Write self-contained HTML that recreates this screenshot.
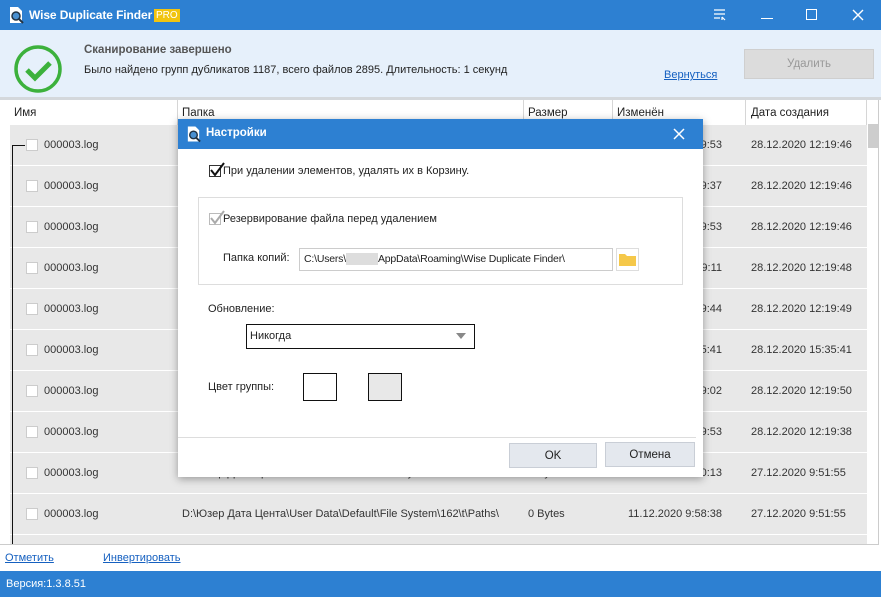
<!DOCTYPE html>
<html><head><meta charset="utf-8">
<style>
*{margin:0;padding:0;box-sizing:border-box}
body{width:881px;height:597px;overflow:hidden;background:#fff;font-family:"Liberation Sans","DejaVu Sans",sans-serif;font-size:11px;color:#222;position:relative}
.abs{position:absolute}
.title{left:0;top:0;width:881px;height:30px;background:#2d80d2;color:#fff}
.hdr{left:0;top:30px;width:881px;height:68px;background:#e6f0fb}
.grayline{left:0;top:97px;width:881px;height:3px;background:#d4d8dc}
.th{top:100px;height:25px;line-height:26px;font-size:11.5px;color:#222}
.sep{top:100px;width:1px;height:25px;background:#d6d6d6}
.row{left:10px;width:857px;height:40px;background:#e8e8e8}
.cell{line-height:40px;font-size:11px;color:#333;white-space:nowrap}
.cb{width:12px;height:12px;background:#fff;border:1px solid #ccc}
a{color:#1560c0;text-decoration:underline}
.dlg{left:178px;top:119px;width:525px;height:358px;background:#fff;box-shadow:0 2px 8px rgba(0,0,0,.35)}
.btn{background:#e4e8ee;border:1px solid #c9ced6;text-align:center;line-height:24px;font-size:11.5px;color:#222}
</style></head><body>
<div class="abs title">
 <svg class="abs" style="left:7px;top:6px" width="18" height="18" viewBox="0 0 18 18"><path d="M3 1h8l4 4v12H3z" fill="#fff"/><circle cx="9" cy="10" r="4" fill="#4a90d0" stroke="#234" stroke-width="1.5"/><path d="M12 13l4 4" stroke="#234" stroke-width="2"/></svg>
 <div class="abs" style="left:29px;top:8px;font-weight:bold;font-size:12px;letter-spacing:-0.1px">Wise Duplicate Finder</div>
 <div class="abs" style="left:154px;top:9px;background:#f1c40f;color:#fff;font-size:10px;padding:0 2px;line-height:13px">PRO</div>
 <svg class="abs" style="left:713px;top:9px" width="14" height="12"><path d="M1 1h11M1 5h11M1 9h6M9 8l3 3M9 8v3" stroke="#fff" stroke-width="1.2" fill="none"/></svg>
 <div class="abs" style="left:761px;top:18px;width:12px;height:1px;background:#fff"></div>
 <div class="abs" style="left:806px;top:9px;width:11px;height:11px;border:1px solid #fff"></div>
 <svg class="abs" style="left:852px;top:9px" width="12" height="12"><path d="M1 1l10 10M11 1L1 11" stroke="#fff" stroke-width="1.4"/></svg>
</div>
<div class="abs hdr">
 <svg class="abs" style="left:13px;top:14px" width="50" height="50"><circle cx="25" cy="25" r="22" fill="none" stroke="#3cb13c" stroke-width="3.5"/><path d="M14 26l8 8 15-15" fill="none" stroke="#3cb13c" stroke-width="5"/></svg>
 <div class="abs" style="left:84px;top:14px;font-weight:bold;color:#555;font-size:11.5px">Сканирование завершено</div>
 <div class="abs" style="left:84px;top:34px;font-size:11px;color:#222">Было найдено групп дубликатов 1187, всего файлов 2895. Длительность: 1 секунд</div>
 <a class="abs" style="left:664px;top:39px;font-size:11px">Вернуться</a>
 <div class="abs" style="left:744px;top:19px;width:130px;height:30px;background:#dcdcdc;border:1px solid #cfcfcf;color:#999;text-align:center;line-height:28px;font-size:11.5px">Удалить</div>
</div>
<div class="abs grayline"></div>
<div class="abs th" style="left:14px">Имя</div>
<div class="abs th" style="left:182px">Папка</div>
<div class="abs th" style="left:528px">Размер</div>
<div class="abs th" style="left:617px">Изменён</div>
<div class="abs th" style="left:751px">Дата создания</div>
<div class="abs sep" style="left:177px"></div><div class="abs sep" style="left:523px"></div><div class="abs sep" style="left:612px"></div><div class="abs sep" style="left:745px"></div><div class="abs sep" style="left:866px"></div>
<div class="abs" style="left:878px;top:100px;width:1px;height:445px;background:#ccc"></div>
<div class="abs" style="left:0;top:544px;width:879px;height:1px;background:#ccc"></div>
<div class="abs" style="left:868px;top:124px;width:10px;height:24px;background:#cdcdcd"></div>

<div class="abs row" style="top:125px"></div>
<div class="abs row" style="top:166px"></div>
<div class="abs row" style="top:207px"></div>
<div class="abs row" style="top:248px"></div>
<div class="abs row" style="top:289px"></div>
<div class="abs row" style="top:330px"></div>
<div class="abs row" style="top:371px"></div>
<div class="abs row" style="top:412px"></div>
<div class="abs row" style="top:453px"></div>
<div class="abs row" style="top:494px"></div>
<div class="abs row" style="top:535px;height:9px"></div>

<div class="abs" style="left:12px;top:145px;width:1px;height:399px;background:#111"></div>
<div class="abs" style="left:12px;top:145px;width:13px;height:1px;background:#111"></div>

<div class="abs" style="left:26px;top:125px">
 <div style="height:41px;position:relative"><div class="abs cb" style="top:14px"></div><div class="abs cell" style="left:18px">000003.log</div></div>
 <div style="height:41px;position:relative"><div class="abs cb" style="top:14px"></div><div class="abs cell" style="left:18px">000003.log</div></div>
 <div style="height:41px;position:relative"><div class="abs cb" style="top:14px"></div><div class="abs cell" style="left:18px">000003.log</div></div>
 <div style="height:41px;position:relative"><div class="abs cb" style="top:14px"></div><div class="abs cell" style="left:18px">000003.log</div></div>
 <div style="height:41px;position:relative"><div class="abs cb" style="top:14px"></div><div class="abs cell" style="left:18px">000003.log</div></div>
 <div style="height:41px;position:relative"><div class="abs cb" style="top:14px"></div><div class="abs cell" style="left:18px">000003.log</div></div>
 <div style="height:41px;position:relative"><div class="abs cb" style="top:14px"></div><div class="abs cell" style="left:18px">000003.log</div></div>
 <div style="height:41px;position:relative"><div class="abs cb" style="top:14px"></div><div class="abs cell" style="left:18px">000003.log</div></div>
 <div style="height:41px;position:relative"><div class="abs cb" style="top:14px"></div><div class="abs cell" style="left:18px">000003.log</div></div>
 <div style="height:41px;position:relative"><div class="abs cb" style="top:14px"></div><div class="abs cell" style="left:18px">000003.log</div></div>
</div>
<div class="abs" style="left:616px;top:125px;width:106px;text-align:right">
 <div class="cell" style="height:41px">28.12.2020 12:19:53</div>
 <div class="cell" style="height:41px">28.12.2020 12:19:37</div>
 <div class="cell" style="height:41px">28.12.2020 12:19:53</div>
 <div class="cell" style="height:41px">28.12.2020 12:19:11</div>
 <div class="cell" style="height:41px">28.12.2020 12:19:44</div>
 <div class="cell" style="height:41px">28.12.2020 15:35:41</div>
 <div class="cell" style="height:41px">28.12.2020 12:19:02</div>
 <div class="cell" style="height:41px">28.12.2020 12:19:53</div>
 <div class="cell" style="height:41px">27.12.2020 9:50:13</div>
 <div class="cell" style="height:41px">11.12.2020 9:58:38</div>
</div>
<div class="abs" style="left:751px;top:125px">
 <div class="cell" style="height:41px">28.12.2020 12:19:46</div>
 <div class="cell" style="height:41px">28.12.2020 12:19:46</div>
 <div class="cell" style="height:41px">28.12.2020 12:19:46</div>
 <div class="cell" style="height:41px">28.12.2020 12:19:48</div>
 <div class="cell" style="height:41px">28.12.2020 12:19:49</div>
 <div class="cell" style="height:41px">28.12.2020 15:35:41</div>
 <div class="cell" style="height:41px">28.12.2020 12:19:50</div>
 <div class="cell" style="height:41px">28.12.2020 12:19:38</div>
 <div class="cell" style="height:41px">27.12.2020 9:51:55</div>
 <div class="cell" style="height:41px">27.12.2020 9:51:55</div>
</div>
<div class="abs cell" style="left:182px;top:494px;font-size:11px">D:\Юзер Дата Цента\User Data\Default\File System\162\t\Paths\</div>
<div class="abs cell" style="left:528px;top:494px">0 Bytes</div>
<div class="abs cell" style="left:182px;top:453px;font-size:11px">D:\Юзер Дата Цента\User Data\Default\File System\162\t\Paths\</div>
<div class="abs cell" style="left:528px;top:453px">0 Bytes</div>

<a class="abs" style="left:5px;top:552px;font-size:11px">Отметить</a>
<a class="abs" style="left:103px;top:552px;font-size:11px">Инвертировать</a>
<div class="abs" style="left:0;top:571px;width:881px;height:26px;background:#2d80d2;color:#fff;font-size:11px;line-height:26px;padding-left:6px">Версия:1.3.8.51</div>

<div class="abs dlg">
 <div class="abs" style="left:0;top:0;width:525px;height:30px;background:#2d80d2"></div>
 <svg class="abs" style="left:7px;top:6px" width="17" height="18" viewBox="0 0 18 18"><path d="M3 1h8l4 4v12H3z" fill="#fff"/><circle cx="9" cy="10" r="4" fill="#4a90d0" stroke="#234" stroke-width="1.5"/><path d="M12 13l4 4" stroke="#234" stroke-width="2"/></svg>
 <div class="abs" style="left:28px;top:8px;color:#fff;font-weight:bold;font-size:11.5px">Настройки</div>
 <svg class="abs" style="left:495px;top:9px" width="12" height="12"><path d="M1 1l10 10M11 1L1 11" stroke="#fff" stroke-width="1.5"/></svg>
 <div class="abs" style="left:31px;top:46px;width:12px;height:12px;border:1px solid #333;background:#fff"></div>
 <svg class="abs" style="left:31px;top:43px" width="16" height="16"><path d="M2 8l4 5 9-12" stroke="#111" stroke-width="2" fill="none"/></svg>
 <div class="abs" style="left:45px;top:46px">При удалении элементов, удалять их в Корзину.</div>
 <div class="abs" style="left:20px;top:78px;width:485px;height:88px;border:1px solid #ddd"></div>
 <div class="abs" style="left:31px;top:94px;width:12px;height:12px;border:1px solid #bbb;background:#fff"></div>
 <svg class="abs" style="left:31px;top:91px" width="16" height="16"><path d="M2 8l4 5 9-12" stroke="#aaa" stroke-width="2" fill="none"/></svg>
 <div class="abs" style="left:45px;top:94px">Резервирование файла перед удалением</div>
 <div class="abs" style="left:45px;top:133px">Папка копий:</div>
 <div class="abs" style="left:121px;top:129px;width:314px;height:23px;border:1px solid #ccc;padding-left:4px;line-height:21px;white-space:nowrap;overflow:hidden;font-size:10.5px;letter-spacing:-0.2px">C:\Users\<span style="display:inline-block;width:32px;height:12px;background:#ddd;vertical-align:middle"></span>AppData\Roaming\Wise Duplicate Finder\</div>
 <div class="abs" style="left:438px;top:129px;width:23px;height:23px;border:1px solid #ddd"></div>
 <svg class="abs" style="left:440px;top:133px" width="19" height="15"><path d="M1 2h6l2 2h9v10H1z" fill="#f5c84a"/></svg>
 <div class="abs" style="left:30px;top:184px">Обновление:</div>
 <div class="abs" style="left:68px;top:205px;width:229px;height:25px;border:1px solid #111;line-height:23px;padding-left:3px">Никогда</div>
 <svg class="abs" style="left:278px;top:214px" width="10" height="6"><path d="M0 0h10L5 6z" fill="#888"/></svg>
 <div class="abs" style="left:30px;top:262px">Цвет группы:</div>
 <div class="abs" style="left:125px;top:254px;width:34px;height:28px;border:1px solid #111;background:#fff"></div>
 <div class="abs" style="left:190px;top:254px;width:34px;height:28px;border:1px solid #111;background:#e8e8e8"></div>
 <div class="abs" style="left:0;top:318px;width:518px;height:1px;background:#ddd"></div>
 <div class="abs btn" style="left:331px;top:324px;width:88px;height:25px">OK</div>
 <div class="abs btn" style="left:427px;top:323px;width:90px;height:25px">Отмена</div>
</div>
</body></html>
